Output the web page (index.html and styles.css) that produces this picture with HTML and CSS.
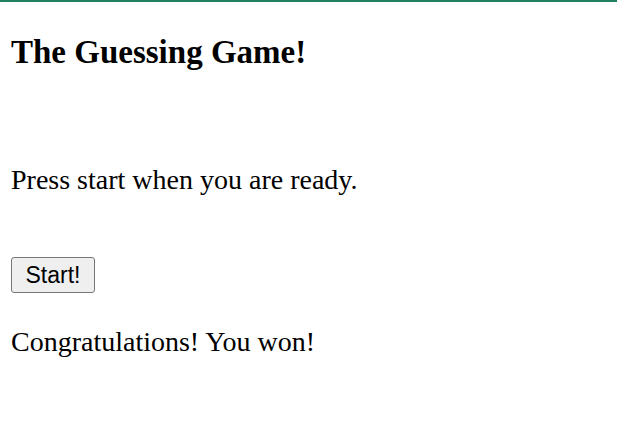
FILE: index.html
```html
<!DOCTYPE html>
<html lang="en">
<head>
<meta charset="utf-8">
<title>The Guessing Game!</title>
<link rel="stylesheet" href="styles.css">
</head>
<body>
<div class="top-bar"></div>
<main class="game">
  <h1 class="title">The Guessing Game!</h1>
  <p class="prompt">Press start when you are ready.</p>
  <button class="start-btn" type="button">Start!</button>
  <p class="result">Congratulations! You won!</p>
</main>
</body>
</html>
```
FILE: styles.css
```css
html, body {
  margin: 0;
  padding: 0;
  background: #ffffff;
}
body {
  font-family: "Liberation Serif", "Times New Roman", serif;
  color: #000000;
}
.top-bar {
  height: 2px;
  background: #23805f;
}
.game {
  display: flex;
  flex-direction: column;
  align-items: flex-start;
  padding: 0 11px;
}
.title {
  margin: 32px 0 0;
  font-size: 33px;
  line-height: 36px;
  font-weight: bold;
}
.prompt {
  margin: 94px 0 0;
  font-size: 28px;
  line-height: 32px;
}
.start-btn {
  margin-top: 61px;
  box-sizing: border-box;
  width: 84px;
  height: 36px;
  padding: 0;
  font-family: "Liberation Sans", Arial, sans-serif;
  font-size: 23px;
  color: #000000;
  background: #efefef;
  border: 1px solid #767676;
  border-radius: 3px;
}
.result {
  margin: 33px 0 0;
  font-size: 28px;
  line-height: 32px;
}
```
